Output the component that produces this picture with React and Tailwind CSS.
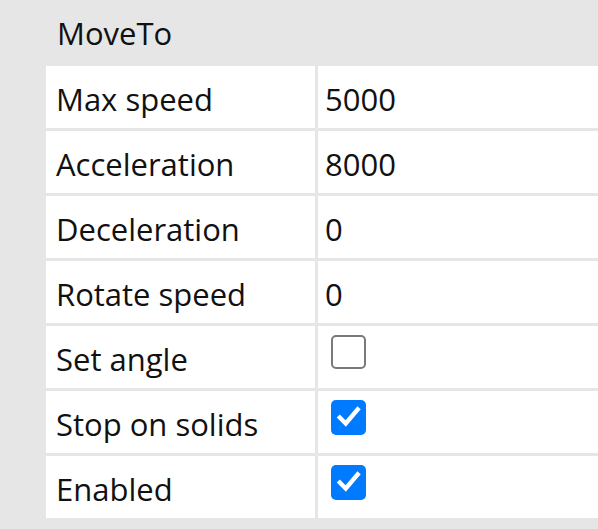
const rows = [
  { label: "Max speed", value: "5000" },
  { label: "Acceleration", value: "8000" },
  { label: "Deceleration", value: "0" },
  { label: "Rotate speed", value: "0" },
  { label: "Set angle", check: false },
  { label: "Stop on solids", check: true },
  { label: "Enabled", check: true },
];

function Checkbox({ checked }) {
  if (!checked) {
    return <div className="w-[35px] h-[34px] rounded-[5px] border-[2.5px] border-[#7a7a7a] bg-white" />;
  }
  return (
    <div className="w-[35px] h-[35px] rounded-[5px] bg-[#007aff] flex items-center justify-center">
      <svg width="26" height="26" viewBox="0 0 24 24">
        <path d="M3.5 12.5 L9 18 L20 5" fill="none" stroke="white" strokeWidth="4" strokeLinecap="square" />
      </svg>
    </div>
  );
}

export default function App() {
  return (
    <div className="w-[598px] h-[529px] overflow-hidden bg-[#e6e6e6] text-[#111] font-['Open_Sans',sans-serif] text-[31px] leading-none">
      <div className="h-[66px] pl-[57px] flex items-center">MoveTo</div>
      <div className="ml-[46px] grid gap-y-[3px]">
        {rows.map((r) => (
          <div key={r.label} className="grid grid-cols-[269px_1fr] gap-x-[3px] h-[62px]">
            <div className="bg-white flex items-center pl-[10px] pt-[4px]">{r.label}</div>
            <div className="bg-white flex items-center pl-[7px] pt-[4px]">
              {r.value !== undefined ? r.value : (
                <div className="ml-[6px] -mt-[14px]">
                  <Checkbox checked={r.check} />
                </div>
              )}
            </div>
          </div>
        ))}
      </div>
    </div>
  );
}
